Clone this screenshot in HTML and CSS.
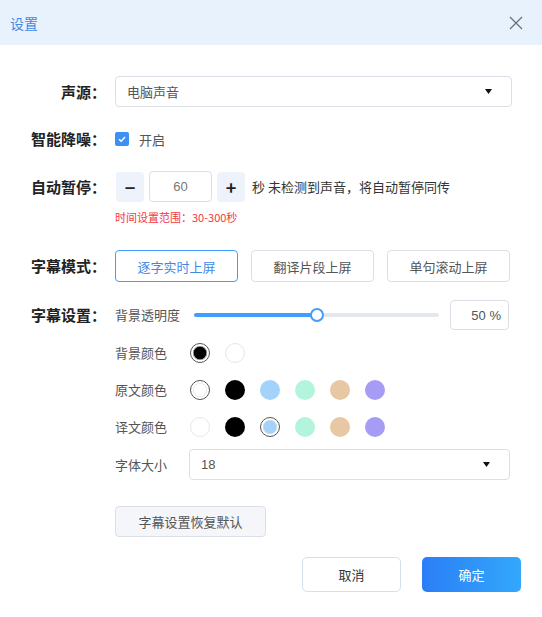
FILE: index.html
```html
<!DOCTYPE html>
<html lang="zh">
<head>
<meta charset="utf-8">
<link rel="stylesheet" href="styles.css">
</head>
<body>
<div class="dialog">
  <div class="header">
    <span class="title">设置</span>
    <svg class="close" width="14" height="14" viewBox="0 0 14 14"><path d="M1 1L13 13M13 1L1 13" stroke="#6b6f76" stroke-width="1.3" fill="none"/></svg>
  </div>
  <div class="content">
    <div class="row r-source">
      <div class="label">声源：</div>
      <div class="select wide"><span>电脑声音</span><svg width="7" height="5" viewBox="0 0 7 5"><path d="M0 0H7L3.5 5Z" fill="#111"/></svg></div>
    </div>
    <div class="row r-noise">
      <div class="label">智能降噪：</div>
      <div class="check"><span class="box"><svg width="10" height="10" viewBox="0 0 10 10"><path d="M2 5.2L4.2 7.2L8 3" stroke="#fff" stroke-width="1.5" fill="none"/></svg></span><span class="ctext">开启</span></div>
    </div>
    <div class="row r-pause">
      <div class="label">自动暂停：</div>
      <div class="stepper">
        <span class="sbtn">−</span>
        <span class="num">60</span>
        <span class="sbtn plus">+</span>
        <span class="ptext">秒 未检测到声音，将自动暂停同传</span>
      </div>
    </div>
    <div class="hint">时间设置范围：30-300秒</div>
    <div class="row r-mode">
      <div class="label">字幕模式：</div>
      <div class="modes">
        <span class="mode active">逐字实时上屏</span>
        <span class="mode">翻译片段上屏</span>
        <span class="mode">单句滚动上屏</span>
      </div>
    </div>
    <div class="row r-sub">
      <div class="label">字幕设置：</div>
      <div class="subs">
        <div class="sub r-opacity">
          <span class="slabel">背景透明度</span>
          <div class="slider"><div class="fill"></div><div class="thumb"></div></div>
          <span class="pct">50 %</span>
        </div>
        <div class="sub r-color">
          <span class="slabel">背景颜色</span>
          <div class="dots">
            <span class="dot sel" style="--c:#000"></span>
            <span class="dot light" style="--c:#fff"></span>
          </div>
        </div>
        <div class="sub r-color">
          <span class="slabel">原文颜色</span>
          <div class="dots">
            <span class="dot sel" style="--c:#fff"></span>
            <span class="dot" style="--c:#000"></span>
            <span class="dot" style="--c:#a3d3fb"></span>
            <span class="dot" style="--c:#b3f4dd"></span>
            <span class="dot" style="--c:#e8c7a3"></span>
            <span class="dot" style="--c:#a79cf5"></span>
          </div>
        </div>
        <div class="sub r-color">
          <span class="slabel">译文颜色</span>
          <div class="dots">
            <span class="dot light" style="--c:#fff"></span>
            <span class="dot" style="--c:#000"></span>
            <span class="dot sel" style="--c:#a3d3fb"></span>
            <span class="dot" style="--c:#b3f4dd"></span>
            <span class="dot" style="--c:#e8c7a3"></span>
            <span class="dot" style="--c:#a79cf5"></span>
          </div>
        </div>
        <div class="sub r-font">
          <span class="slabel">字体大小</span>
          <div class="select fsel"><span>18</span><svg width="7" height="5" viewBox="0 0 7 5"><path d="M0 0H7L3.5 5Z" fill="#111"/></svg></div>
        </div>
        <div class="restore">字幕设置恢复默认</div>
      </div>
    </div>
    <div class="footer">
      <span class="btn cancel">取消</span>
      <span class="btn ok">确定</span>
    </div>
  </div>
</div>
</body>
</html>
```

FILE: styles.css
```css
* { box-sizing: border-box; }
html, body { margin: 0; padding: 0; background: #fff; }
body { font-family: "Noto Sans CJK SC", "Liberation Sans", sans-serif; color: #333; width: 542px; height: 617px; overflow: hidden; }
.dialog { width: 542px; }
.header { height: 45px; background: #e8f2fd; display: flex; align-items: center; justify-content: space-between; padding: 0 19px 0 10px; }
.title { font-size: 14px; color: #3d8ae6; }
.close { display: block; margin-top: 1px; }
.content { padding-top: 31px; }
.row { display: flex; align-items: center; }
.label { width: 106px; text-align: right; font-size: 15px; font-weight: 700; color: #222; margin-right: 9px; flex: none; line-height: 20px; }
.select { border: 1px solid #dcdfe6; border-radius: 4px; height: 31px; display: flex; align-items: center; justify-content: space-between; padding: 0 19px 0 11px; font-size: 13px; color: #555; }
.select svg { display: block; }
.wide { width: 397px; }
.r-noise { margin-top: 22px; height: 20px; }
.check { display: flex; align-items: center; }
.box { width: 14px; height: 14px; border-radius: 2px; background: #3d8ef5; display: flex; align-items: center; justify-content: center; }
.box svg { display: block; }
.ctext { font-size: 13px; color: #555; margin-left: 10px; }
.r-pause { margin-top: 22px; height: 31px; }
.stepper { display: flex; align-items: center; margin-left: 1px; }
.sbtn { width: 28px; height: 30px; background: #eef3fb; border-radius: 4px; display: flex; align-items: center; justify-content: center; font-size: 18px; font-weight: 700; color: #222; }
.num { width: 63px; height: 31px; border: 1px solid #dcdfe6; border-radius: 4px; margin: 0 5px; display: flex; align-items: center; justify-content: center; font-size: 13px; color: #777; font-family: "Liberation Sans", sans-serif; }
.ptext { font-size: 13px; color: #333; margin-left: 7px; }
.hint { margin: 7px 0 0 115px; font-size: 11px; color: #f03a3e; line-height: 16px; height: 16px; }
.r-mode { margin-top: 25px; height: 32px; }
.modes { display: flex; gap: 13px; }
.mode { width: 123px; height: 32px; border: 1px solid #dcdfe6; border-radius: 4px; display: flex; align-items: center; justify-content: center; font-size: 13px; color: #555; }
.mode.active { border-color: #409eff; color: #3d8ae6; }
.r-sub { margin-top: 18px; align-items: flex-start; }
.r-sub .label { margin-top: 5px; }
.subs { display: flex; flex-direction: column; }
.sub { display: flex; align-items: center; }
.slabel { width: 74px; flex: none; font-size: 13px; color: #555; line-height: 20px; }
.r-opacity { height: 30px; }
.slider { position: relative; width: 245px; height: 4px; background: #e4e7ed; border-radius: 2px; margin-left: 5px; }
.fill { width: 123px; height: 4px; background: #409eff; border-radius: 2px; }
.thumb { position: absolute; left: 116px; top: -5px; width: 14px; height: 14px; border-radius: 50%; background: #fff; border: 2px solid #409eff; }
.pct { width: 59px; height: 30px; margin-left: 11px; border: 1px solid #dcdfe6; border-radius: 4px; display: flex; align-items: center; justify-content: flex-end; padding-right: 7px; font-size: 13px; color: #555; font-family: "Liberation Sans", sans-serif; }
.r-color { height: 20px; margin-top: 17px; }
.r-color:nth-child(2) { margin-top: 13px; }
.dots { display: flex; gap: 15px; margin-left: 1px; }
.dot { width: 20px; height: 20px; border-radius: 50%; background: var(--c); }
.dot.light { border: 1px solid #e6e6e6; }
.dot.sel { background: #fff; border: 1px solid #555; padding: 2px; }
.dot.sel::after { content: ""; display: block; width: 14px; height: 14px; border-radius: 50%; background: var(--c); box-shadow: 0 0 0 0.5px #ddd inset; }
.r-font { margin-top: 12px; height: 31px; }
.fsel { width: 321px; }
.fsel span { font-family: "Liberation Sans", sans-serif; }
.restore { margin-top: 26px; width: 151px; height: 31px; margin-left: 0; background: #f4f6f9; border: 1px solid #dcdfe6; border-radius: 4px; display: flex; align-items: center; justify-content: center; font-size: 13px; color: #555; }
.footer { display: flex; justify-content: flex-end; gap: 21px; padding-right: 21px; margin-top: 20px; }
.btn { width: 99px; height: 35px; border-radius: 5px; display: flex; align-items: center; justify-content: center; font-size: 13px; }
.cancel { border: 1px solid #d6e0ec; color: #333; }
.ok { background: linear-gradient(90deg, #2b7ef6, #33a8fc); color: #fff; }
```
